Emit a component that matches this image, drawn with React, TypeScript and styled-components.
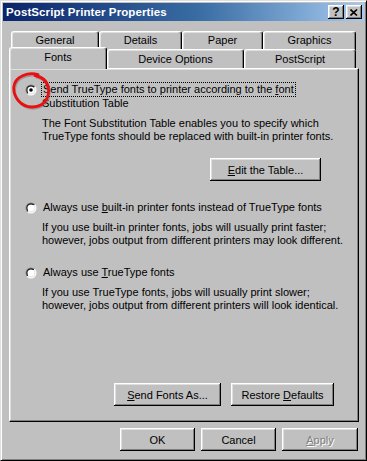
import React from 'react';
import styled, { createGlobalStyle } from 'styled-components';

const GlobalStyle = createGlobalStyle`
  html, body {
    margin: 0;
    padding: 0;
    background: #c0c0c0;
  }
  body {
    font-family: "Liberation Sans", Arial, sans-serif;
    font-size: 11px;
    color: #000;
  }
`;

const raised = `
  box-shadow: inset -1px -1px #000, inset 1px 1px #fff, inset -2px -2px #808080, inset 2px 2px #dfdfdf;
`;

const Window = styled.div`
  box-sizing: border-box;
  width: 367px;
  height: 461px;
  background: #c0c0c0;
  border: 1px solid;
  border-color: #dfdfdf #000 #000 #dfdfdf;
  box-shadow: inset 1px 1px #fff, inset -1px -1px #808080;
  padding: 2px;
  display: flex;
  flex-direction: column;
`;

const TitleBar = styled.div`
  height: 18px;
  display: flex;
  align-items: center;
  padding: 0 2px 0 3px;
  background: linear-gradient(90deg, #0a246a 0%, #3a6ea5 55%, #a6caf0 100%);
`;

const Title = styled.div`
  flex: 1;
  color: #fff;
  font-weight: bold;
  font-size: 11.5px;
  letter-spacing: 0.1px;
`;

const CaptionButton = styled.div<{ $gap?: number }>`
  box-sizing: border-box;
  width: 16px;
  height: 14px;
  margin-left: ${(p) => p.$gap ?? 0}px;
  background: #c0c0c0;
  ${raised}
  display: flex;
  align-items: center;
  justify-content: center;
  font-weight: bold;
  font-size: 12px;
  line-height: 1;
`;

const Body = styled.div`
  flex: 1;
  display: flex;
  flex-direction: column;
  padding: 10px 6px 0 6px;
`;

const TabRow = styled.div<{ $indent: number; $h: number }>`
  display: flex;
  height: ${(p) => p.$h}px;
  margin-left: ${(p) => p.$indent}px;
  align-items: flex-start;
`;

const Tab = styled.div<{ $w: number; $h: number; $selected?: boolean; $textY: number }>`
  box-sizing: border-box;
  position: relative;
  z-index: ${(p) => (p.$selected ? 3 : 1)};
  width: ${(p) => p.$w}px;
  height: ${(p) => p.$h}px;
  margin-top: ${(p) => (p.$selected ? -2 : 0)}px;
  background: #c0c0c0;
  border-top: 1px solid #fff;
  border-left: 1px solid #fff;
  border-right: 1px solid #000;
  border-radius: 3px 3px 0 0;
  box-shadow: inset -1px 0 #808080, inset 1px 1px #dfdfdf;
  text-align: center;
  padding-top: ${(p) => p.$textY}px;
  line-height: 13px;
`;

const Panel = styled.div`
  box-sizing: border-box;
  position: relative;
  z-index: 2;
  width: 350px;
  height: 354px;
  border: 1px solid;
  border-color: #fff #000 #000 #fff;
  box-shadow: inset -1px -1px #808080, inset 1px 1px #dfdfdf;
  display: flex;
  flex-direction: column;
  padding: 13px 0 15px 15px;
`;

const Option = styled.div<{ $top: number }>`
  margin-top: ${(p) => p.$top}px;
  display: flex;
  flex-direction: column;
`;

const RadioRow = styled.div`
  display: flex;
  align-items: center;
  height: 15px;
  gap: 4px;
`;

const Label = styled.span<{ $focus?: boolean }>`
  line-height: 13px;
  padding: 0 1px;
  border: 1px ${(p) => (p.$focus ? 'dotted #000' : 'solid transparent')};
`;

const Indent = styled.div<{ $top?: number }>`
  margin-left: 17px;
  margin-top: ${(p) => p.$top ?? 0}px;
  line-height: 13px;
`;

const U = styled.span`
  text-decoration: underline;
  text-underline-offset: 1px;
`;

const Button = styled.div<{ $w: number; $disabled?: boolean }>`
  box-sizing: border-box;
  width: ${(p) => p.$w}px;
  height: 23px;
  background: #c0c0c0;
  ${raised}
  display: flex;
  align-items: center;
  justify-content: center;
  color: ${(p) => (p.$disabled ? '#808080' : '#000')};
  text-shadow: ${(p) => (p.$disabled ? '1px 1px #fff' : 'none')};
`;

const EditRow = styled.div`
  margin: 15px 0 0 185px;
`;

const PanelButtons = styled.div`
  margin-top: auto;
  margin-left: 89px;
  display: flex;
  gap: 10px;
`;

const Footer = styled.div`
  display: flex;
  justify-content: flex-end;
  gap: 6px;
  margin-top: 6px;
`;

const Annotation = styled.svg`
  position: absolute;
  left: 2px;
  top: 3px;
  pointer-events: none;
`;

function Radio({ checked }: { checked?: boolean }) {
  return (
    <svg width="12" height="12" viewBox="0 0 12 12">
      <defs>
        <linearGradient id="ro" x1="0" y1="0" x2="1" y2="1">
          <stop offset="0.5" stopColor="#808080" />
          <stop offset="0.5" stopColor="#fff" />
        </linearGradient>
        <linearGradient id="ri" x1="0" y1="0" x2="1" y2="1">
          <stop offset="0.5" stopColor="#000" />
          <stop offset="0.5" stopColor="#dfdfdf" />
        </linearGradient>
      </defs>
      <circle cx="6" cy="6" r="5.5" fill="url(#ro)" />
      <circle cx="6" cy="6" r="4.5" fill="url(#ri)" />
      <circle cx="6" cy="6" r="3.6" fill="#fff" />
      {checked && <circle cx="6" cy="6" r="1.8" fill="#000" />}
    </svg>
  );
}

const ringPath =
  'M26 2.5 C16 0 3 4 1.8 15 C1 25 9 35 20 35 C30 35 37 28 36.5 18 C36 10 31 5 23 3.5';

export default function App() {
  return (
    <>
      <GlobalStyle />
      <Window>
        <TitleBar>
          <Title>PostScript Printer Properties</Title>
          <CaptionButton>?</CaptionButton>
          <CaptionButton $gap={2}>
            <svg width="8" height="7" viewBox="0 0 8 7">
              <path d="M0.5 0.5 L7 6.5 M7 0.5 L0.5 6.5" stroke="#000" strokeWidth="1.6" />
            </svg>
          </CaptionButton>
        </TitleBar>
        <Body>
          <TabRow $indent={2} $h={18}>
            <Tab $w={88} $h={19} $textY={2}>General</Tab>
            <Tab $w={83} $h={19} $textY={2}>Details</Tab>
            <Tab $w={81} $h={19} $textY={2}>Paper</Tab>
            <Tab $w={93} $h={19} $textY={2}>Graphics</Tab>
          </TabRow>
          <TabRow $indent={0} $h={19}>
            <Tab $w={98} $h={22} $selected $textY={3}>Fonts</Tab>
            <Tab $w={137} $h={19} $textY={3}>Device Options</Tab>
            <Tab $w={112} $h={19} $textY={3}>PostScript</Tab>
          </TabRow>
          <Panel>
            <Annotation width="40" height="40" viewBox="0 0 40 40">
              <path
                d={ringPath}
                fill="none"
                stroke="#6a4a4a"
                strokeOpacity="0.35"
                strokeWidth="2.5"
                transform="translate(1 1.5)"
              />
              <path
                d={ringPath}
                fill="none"
                stroke="#e81010"
                strokeWidth="2.8"
                strokeLinecap="round"
              />
            </Annotation>
            <Option $top={0}>
              <RadioRow>
                <Radio checked />
                <Label $focus>
                  Send TrueType fonts to printer according to the <U>f</U>ont
                </Label>
              </RadioRow>
              <Indent>Substitution Table</Indent>
              <Indent $top={7}>
                The Font Substitution Table enables you to specify which
                <br />
                TrueType fonts should be replaced with built-in printer fonts.
              </Indent>
              <EditRow>
                <Button $w={111}>
                  <span>
                    <U>E</U>dit the Table...
                  </span>
                </Button>
              </EditRow>
            </Option>
            <Option $top={19}>
              <RadioRow>
                <Radio />
                <Label>
                  Always use <U>b</U>uilt-in printer fonts instead of TrueType fonts
                </Label>
              </RadioRow>
              <Indent $top={6}>
                If you use built-in printer fonts, jobs will usually print faster;
                <br />
                however, jobs output from different printers may look different.
              </Indent>
            </Option>
            <Option $top={18}>
              <RadioRow>
                <Radio />
                <Label>
                  Always use <U>T</U>rueType fonts
                </Label>
              </RadioRow>
              <Indent $top={6}>
                If you use TrueType fonts, jobs will usually print slower;
                <br />
                however, jobs output from different printers will look identical.
              </Indent>
            </Option>
            <PanelButtons>
              <Button $w={107}>
                <span>
                  <U>S</U>end Fonts As...
                </span>
              </Button>
              <Button $w={103}>
                <span>
                  Restore <U>D</U>efaults
                </span>
              </Button>
            </PanelButtons>
          </Panel>
          <Footer>
            <Button $w={75}>OK</Button>
            <Button $w={75}>Cancel</Button>
            <Button $w={76} $disabled>
              <span>
                <U>A</U>pply
              </span>
            </Button>
          </Footer>
        </Body>
      </Window>
    </>
  );
}
